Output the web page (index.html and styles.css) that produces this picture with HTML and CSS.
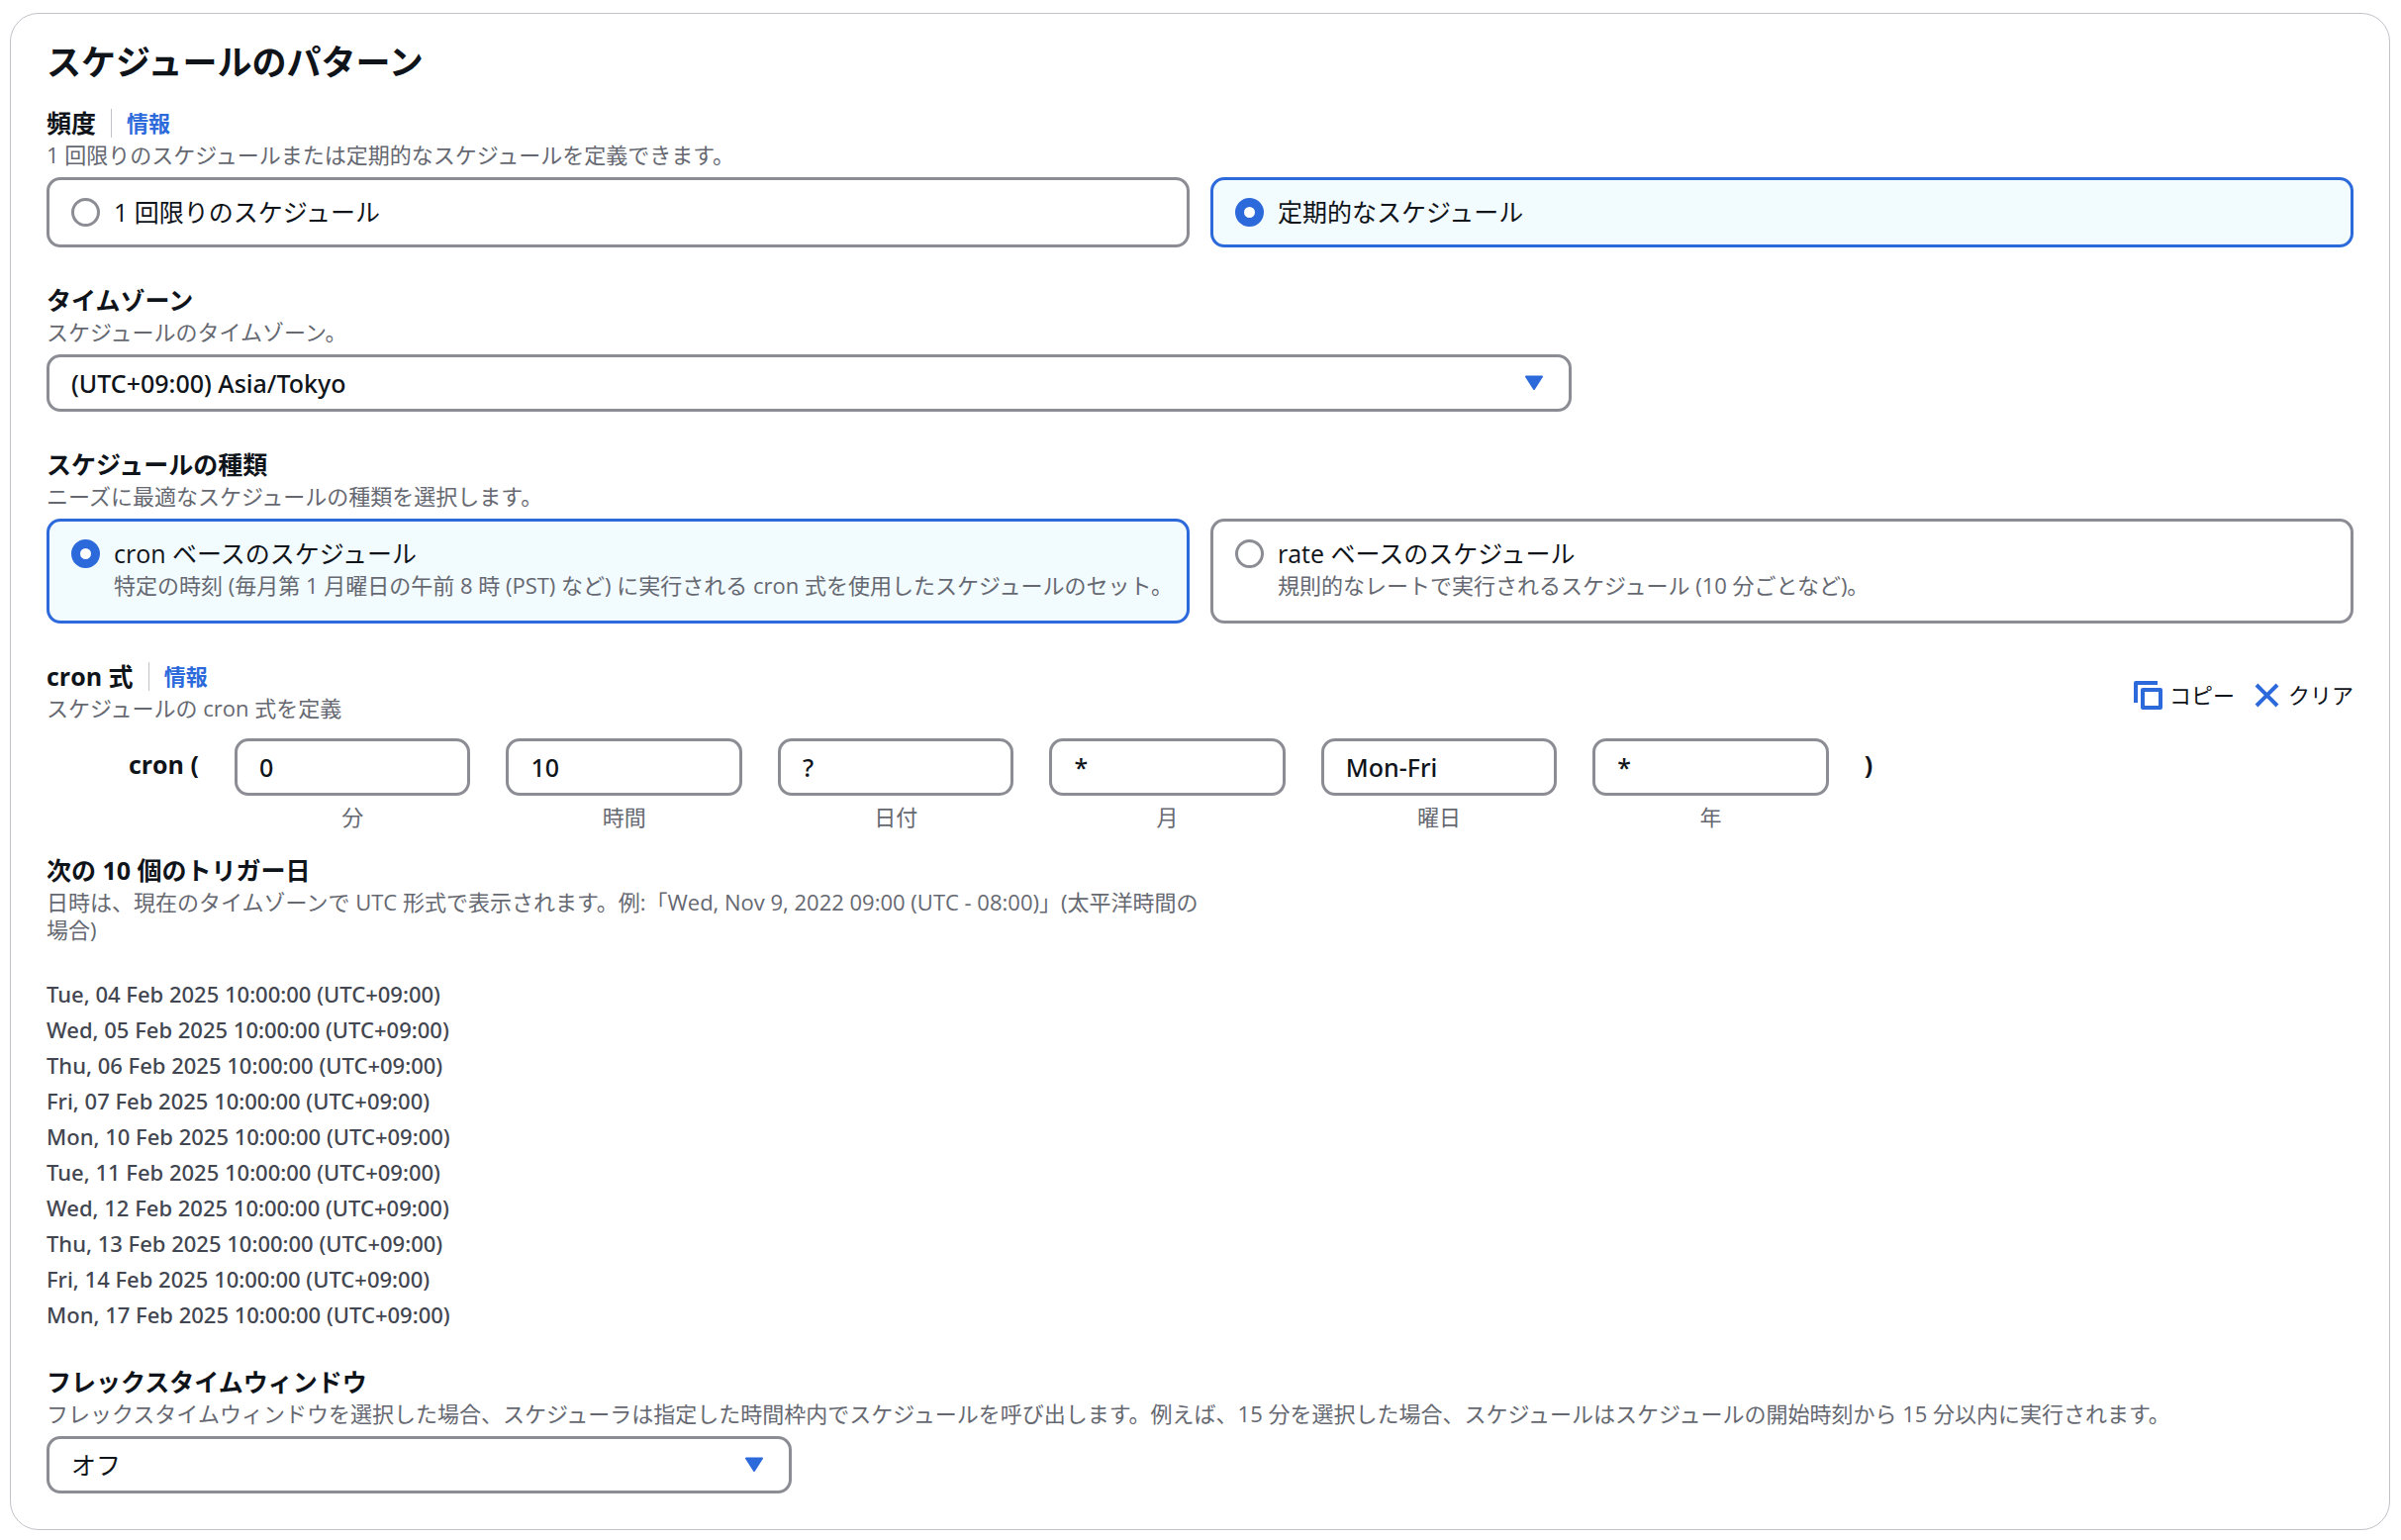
FILE: index.html
```html
<!DOCTYPE html>
<html lang="ja">
<head>
<meta charset="utf-8">
<meta name="viewport" content="width=device-width, initial-scale=1">
<title>スケジュールのパターン</title>
<link rel="stylesheet" href="styles.css">
</head>
<body>
<main class="panel">
  <h2 class="panel-title">スケジュールのパターン</h2>

  <section class="field" role="radiogroup" aria-labelledby="freq-label">
    <div class="label-row"><span class="label" id="freq-label">頻度</span><a class="info" href="#">情報</a></div>
    <p class="description">1 回限りのスケジュールまたは定期的なスケジュールを定義できます。</p>
    <div class="tiles">
      <label class="tile">
        <input class="radio" type="radio" name="frequency">
        <span class="tile-label">1 回限りのスケジュール</span>
      </label>
      <label class="tile">
        <input class="radio" type="radio" name="frequency" checked>
        <span class="tile-label">定期的なスケジュール</span>
      </label>
    </div>
  </section>

  <section class="field">
    <label class="label" for="timezone">タイムゾーン</label>
    <p class="description">スケジュールのタイムゾーン。</p>
    <div class="select select-wide">
      <select class="control latin" id="timezone"><option>(UTC+09:00) Asia/Tokyo</option></select>
      <svg class="caret" viewBox="0 0 20 16" aria-hidden="true"><path d="M2 1.5h16L10 14z"/></svg>
    </div>
  </section>

  <section class="field" role="radiogroup" aria-labelledby="type-label">
    <span class="label" id="type-label">スケジュールの種類</span>
    <p class="description">ニーズに最適なスケジュールの種類を選択します。</p>
    <div class="tiles">
      <label class="tile tile-tall">
        <input class="radio" type="radio" name="type" checked>
        <span class="tile-text">
          <span class="tile-label">cron ベースのスケジュール</span>
          <span class="description">特定の時刻 (毎月第 1 月曜日の午前 8 時 (PST) など) に実行される cron 式を使用したスケジュールのセット。</span>
        </span>
      </label>
      <label class="tile tile-tall">
        <input class="radio" type="radio" name="type">
        <span class="tile-text">
          <span class="tile-label">rate ベースのスケジュール</span>
          <span class="description">規則的なレートで実行されるスケジュール (10 分ごとなど)。</span>
        </span>
      </label>
    </div>
  </section>

  <section class="field cron">
    <div class="cron-head">
      <div>
        <div class="label-row"><span class="label">cron 式</span><a class="info" href="#">情報</a></div>
        <p class="description">スケジュールの cron 式を定義</p>
      </div>
      <div class="actions">
        <button class="action" type="button">
          <svg class="icon" viewBox="0 0 29 29" aria-hidden="true"><path d="M2 22V2h22M9 9h18v18H9z"/></svg>コピー
        </button>
        <button class="action" type="button">
          <svg class="icon" viewBox="0 0 29 29" aria-hidden="true"><path d="M4 4l21 21M25 4L4 25"/></svg>クリア
        </button>
      </div>
    </div>
    <div class="cron-row">
      <span class="paren paren-open">cron (</span>
      <div class="cron-cell"><input class="control latin" id="minute" type="text" value="0"><label class="description" for="minute">分</label></div>
      <div class="cron-cell"><input class="control latin" id="hour" type="text" value="10"><label class="description" for="hour">時間</label></div>
      <div class="cron-cell"><input class="control latin" id="day" type="text" value="?"><label class="description" for="day">日付</label></div>
      <div class="cron-cell"><input class="control latin" id="month" type="text" value="*"><label class="description" for="month">月</label></div>
      <div class="cron-cell"><input class="control latin" id="weekday" type="text" value="Mon-Fri"><label class="description" for="weekday">曜日</label></div>
      <div class="cron-cell"><input class="control latin" id="year" type="text" value="*"><label class="description" for="year">年</label></div>
      <span class="paren">)</span>
    </div>
  </section>

  <section class="triggers">
    <h3 class="label">次の 10 個のトリガー日</h3>
    <p class="description trigger-note">日時は、現在のタイムゾーンで UTC 形式で表示されます。例:「Wed, Nov 9, 2022 09:00 (UTC - 08:00)」(太平洋時間の場合)</p>
    <ul class="dates latin">
      <li>Tue, 04 Feb 2025 10:00:00 (UTC+09:00)</li>
      <li>Wed, 05 Feb 2025 10:00:00 (UTC+09:00)</li>
      <li>Thu, 06 Feb 2025 10:00:00 (UTC+09:00)</li>
      <li>Fri, 07 Feb 2025 10:00:00 (UTC+09:00)</li>
      <li>Mon, 10 Feb 2025 10:00:00 (UTC+09:00)</li>
      <li>Tue, 11 Feb 2025 10:00:00 (UTC+09:00)</li>
      <li>Wed, 12 Feb 2025 10:00:00 (UTC+09:00)</li>
      <li>Thu, 13 Feb 2025 10:00:00 (UTC+09:00)</li>
      <li>Fri, 14 Feb 2025 10:00:00 (UTC+09:00)</li>
      <li>Mon, 17 Feb 2025 10:00:00 (UTC+09:00)</li>
    </ul>
  </section>

  <section>
    <label class="label" for="flex-window">フレックスタイムウィンドウ</label>
    <p class="description">フレックスタイムウィンドウを選択した場合、スケジューラは指定した時間枠内でスケジュールを呼び出します。例えば、15 分を選択した場合、スケジュールはスケジュールの開始時刻から 15 分以内に実行されます。</p>
    <div class="select select-narrow">
      <select class="control" id="flex-window"><option>オフ</option></select>
      <svg class="caret" viewBox="0 0 20 16" aria-hidden="true"><path d="M2 1.5h16L10 14z"/></svg>
    </div>
  </section>
</main>
</body>
</html>
```

FILE: styles.css
```css
:root {
  --text: #0f141a;
  --muted: #656871;
  --border: #8c8c94;
  --accent: #2c6adb;
  --selected: #f2fbfe;
}

* { box-sizing: border-box; }

body {
  margin: 0;
  padding: 13px 11px 11px 10px;
  background: #fff;
  color: var(--text);
  font: 400 25px/36px "Open Sans", "Noto Sans CJK JP", sans-serif;
}

.panel {
  padding: 27px 36px 36px;
  border: 1px solid #c2c3c9;
  border-radius: 29px;
}

h2, h3, p, ul { margin: 0; padding: 0; }

.panel-title {
  margin-bottom: 22px;
  font-size: 35px;
  line-height: 43px;
  font-weight: 700;
}

.field { margin-bottom: 35px; }

.label {
  display: block;
  font-size: 25px;
  line-height: 36px;
  font-weight: 700;
}

.label-row { display: flex; align-items: center; }

.info {
  margin-left: 15px;
  padding-left: 15px;
  border-left: 1px solid #c2c3c9;
  color: var(--accent);
  font-size: 22px;
  line-height: 29px;
  font-weight: 700;
  text-decoration: none;
}

.description {
  display: block;
  color: var(--muted);
  font-size: 22px;
  line-height: 28px;
}

.tiles {
  display: grid;
  grid-template-columns: 1fr 1fr;
  gap: 21px;
  margin-top: 9px;
}

.tile {
  display: flex;
  align-items: flex-start;
  gap: 14px;
  padding: 18px 22px;
  border: 3px solid var(--border);
  border-radius: 14px;
}

.tile:has(.radio:checked) {
  border-color: var(--accent);
  background: var(--selected);
}

.tile-tall { padding-bottom: 24px; padding-right: 0; }

.tile-label { display: block; line-height: 29px; }

.tile-text .description { margin-top: 5px; line-height: 24px; }

.radio {
  flex: none;
  width: 29px;
  height: 29px;
  margin: 0;
  appearance: none;
  border: 3px solid var(--border);
  border-radius: 50%;
  background: #fff;
}

.radio:checked { border: 9px solid var(--accent); }

.control {
  width: 100%;
  height: 58px;
  padding: 0 22px;
  appearance: none;
  border: 3px solid var(--border);
  border-radius: 14px;
  background: #fff;
  color: var(--text);
  font: inherit;
}

.latin {
  font-family: "Noto Sans", "Noto Sans CJK JP", sans-serif;
  font-weight: 500;
}

.select {
  display: grid;
  align-items: center;
  margin-top: 9px;
}

.select > * { grid-area: 1 / 1; }

.select-wide { width: calc((100% - 20px) * 2 / 3); }
.select-narrow { width: calc((100% - 72px) / 3); }

.caret {
  justify-self: end;
  width: 20px;
  height: 16px;
  margin-right: 28px;
  fill: var(--accent);
  stroke: var(--accent);
  stroke-width: 2;
  stroke-linejoin: round;
  pointer-events: none;
}

.cron { margin-bottom: 22px; }

.cron-head {
  display: flex;
  justify-content: space-between;
  align-items: flex-end;
}

.actions { display: flex; gap: 18px; }

.action {
  display: flex;
  align-items: center;
  gap: 7px;
  padding: 12px 0;
  border: 0;
  background: none;
  color: var(--text);
  font: inherit;
  font-size: 22px;
  line-height: 29px;
}

.icon {
  width: 29px;
  height: 29px;
  fill: none;
  stroke: var(--accent);
  stroke-width: 4;
  stroke-linejoin: round;
}

.cron-row {
  display: grid;
  grid-template-columns: 154px repeat(6, 1fr) 28px;
  column-gap: 36px;
  width: 80%;
  margin-top: 17px;
}

.paren {
  font-weight: 700;
  line-height: 52px;
}

.paren-open { text-align: right; }

.cron-cell { text-align: center; }
.cron-cell .control { display: block; margin-bottom: 7px; }

.trigger-note { max-width: 1180px; }

.dates {
  margin: 33px 0 32px;
  list-style: none;
  color: #424650;
  font-size: 22px;
  line-height: 36px;
}
```
